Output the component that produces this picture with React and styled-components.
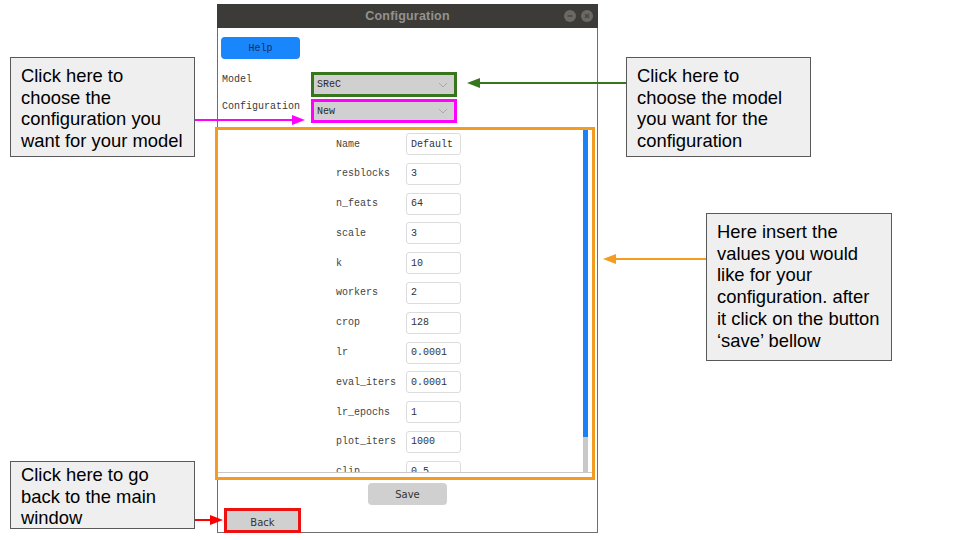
import React from "react";
import styled, { createGlobalStyle } from "styled-components";

const fields = [
  ["Name", "Default"],
  ["resblocks", "3"],
  ["n_feats", "64"],
  ["scale", "3"],
  ["k", "10"],
  ["workers", "2"],
  ["crop", "128"],
  ["lr", "0.0001"],
  ["eval_iters", "0.0001"],
  ["lr_epochs", "1"],
  ["plot_iters", "1000"],
  ["clip", "0.5"],
];

const Chevron = () => (
  <ChevronSvg viewBox="0 0 10 6" width="10" height="6">
    <polyline points="1,1 5,5 9,1" fill="none" stroke="#a8a8a8" strokeWidth="1" />
  </ChevronSvg>
);

const App = () => {
  return (
    <>
      <GlobalStyle />
      <Canvas>
        <Window>
          <TitleBar>
            <span />
            <Title>Configuration</Title>
            <Controls>
              <CircleButton>
                <svg viewBox="0 0 12 12" width="12" height="12">
                  <line x1="3.5" y1="6" x2="8.5" y2="6" stroke="#45443f" strokeWidth="1.4" />
                </svg>
              </CircleButton>
              <CircleButton>
                <svg viewBox="0 0 12 12" width="12" height="12">
                  <path d="M4 4 L8 8 M8 4 L4 8" stroke="#45443f" strokeWidth="1.4" />
                </svg>
              </CircleButton>
            </Controls>
          </TitleBar>

          <Body>
            <HelpButton>Help</HelpButton>

            <FieldGrid>
              <Label>Model</Label>
              <Select $ring="#38761d" $h={25}>
                SReC
                <Chevron />
              </Select>
              <Label>Configuration</Label>
              <Select $ring="#ff00ff" $h={24}>
                New
                <Chevron />
              </Select>
            </FieldGrid>

            <Panel>
              <Viewport>
                <FormGrid>
                  {fields.map(([name, value]) => (
                    <React.Fragment key={name}>
                      <FieldName>{name}</FieldName>
                      <Input>{value}</Input>
                    </React.Fragment>
                  ))}
                </FormGrid>
                <Scrollbar>
                  <Thumb />
                </Scrollbar>
              </Viewport>
            </Panel>

            <SaveButton>Save</SaveButton>
            <BackButton>Back</BackButton>
          </Body>
        </Window>

        <Callout $left={10} $top={57} $w={185} $h={100} $pt={7}>
          Click here to
          <br />
          choose the
          <br />
          configuration you
          <br />
          want for your model
        </Callout>

        <Callout $left={626} $top={57} $w={185} $h={100} $pt={7}>
          Click here to
          <br />
          choose the model
          <br />
          you want for the
          <br />
          configuration
        </Callout>

        <Callout $left={706} $top={213} $w={186} $h={148} $pt={7}>
          Here insert the
          <br />
          values you would
          <br />
          like for your
          <br />
          configuration. after
          <br />
          it click on the button
          <br />
          ‘save’ bellow
        </Callout>

        <Callout $left={10} $top={461} $w={185} $h={68} $pt={2}>
          Click here to go
          <br />
          back to the main
          <br />
          window
        </Callout>

        <Arrows viewBox="0 0 960 540" width="960" height="540">
          <line x1="626" y1="83" x2="478" y2="83" stroke="#38761d" strokeWidth="2" />
          <polygon points="467,83 480,78 480,88" fill="#38761d" />

          <line x1="195" y1="120" x2="294" y2="120" stroke="#ff00ff" strokeWidth="2" />
          <polygon points="305,120 292,115 292,125" fill="#ff00ff" />

          <line x1="706" y1="259" x2="614" y2="259" stroke="#f39c1f" strokeWidth="2" />
          <polygon points="603,259 616,254 616,264" fill="#f39c1f" />

          <line x1="195" y1="520" x2="212" y2="520" stroke="#ff0000" strokeWidth="2" />
          <polygon points="223,520 210,515 210,525" fill="#ff0000" />
        </Arrows>
      </Canvas>
    </>
  );
};

const GlobalStyle = createGlobalStyle`
  body {
    margin: 0;
    background: #fff;
  }
`;

const Canvas = styled.div`
  position: relative;
  width: 960px;
  height: 540px;
  overflow: hidden;
  padding-top: 4px;
  box-sizing: border-box;
  background: #fff;
`;

const Window = styled.div`
  margin-left: 217px;
  width: 381px;
  height: 529px;
  box-sizing: border-box;
  border-left: 1px solid #6f6f6f;
  border-right: 1px solid #6f6f6f;
  border-bottom: 1px solid #6f6f6f;
  display: flex;
  flex-direction: column;
  background: #fff;
`;

const TitleBar = styled.div`
  height: 24px;
  flex-shrink: 0;
  background: #3c3b37;
  margin: 0 -1px;
  display: grid;
  grid-template-columns: 1fr auto 1fr;
  align-items: center;
`;

const Title = styled.div`
  font-family: "Liberation Sans", Arial, sans-serif;
  font-weight: bold;
  font-size: 12.5px;
  color: #94928c;
  letter-spacing: 0.2px;
`;

const Controls = styled.div`
  display: flex;
  justify-content: flex-end;
  gap: 5px;
  padding-right: 5px;
`;

const CircleButton = styled.div`
  width: 12px;
  height: 12px;
  border-radius: 50%;
  background: #6a6964;
  display: flex;

  svg {
    display: block;
  }
`;

const Body = styled.div`
  flex: 1;
  display: flex;
  flex-direction: column;
  align-items: flex-start;
  padding-top: 9px;
  font-family: "Liberation Mono", "DejaVu Sans Mono", monospace;
  font-size: 10px;
  color: #3a3a3a;
`;

const HelpButton = styled.div`
  margin-left: 3px;
  width: 79px;
  height: 22px;
  border-radius: 4px;
  background: #1a86fc;
  color: #1d2a55;
  display: flex;
  align-items: center;
  justify-content: center;
`;

const FieldGrid = styled.div`
  margin-top: 13px;
  padding-left: 4px;
  display: grid;
  grid-template-columns: 89px 146px;
  row-gap: 2px;
  align-items: start;
`;

const Label = styled.div`
  line-height: 13px;
  padding-top: 1px;
`;

const Select = styled.div`
  height: ${(p) => p.$h}px;
  box-sizing: border-box;
  border: 3px solid ${(p) => p.$ring};
  background: #d0d0d0;
  display: flex;
  align-items: center;
  justify-content: space-between;
  padding: 0 6px 0 3px;
  color: #2a2a2a;
`;

const ChevronSvg = styled.svg`
  display: block;
`;

const Panel = styled.div`
  margin-top: 4px;
  margin-left: -3px;
  width: 380px;
  height: 353px;
  box-sizing: border-box;
  border: 3px solid #f39c1f;
`;

const Viewport = styled.div`
  height: 343px;
  box-sizing: border-box;
  border-bottom: 1px solid #c8c8c8;
  display: flex;
  overflow: hidden;
`;

const FormGrid = styled.div`
  flex: 1;
  display: grid;
  grid-template-columns: 70px 55px;
  grid-auto-rows: 22px;
  row-gap: 7.8px;
  align-items: center;
  padding: 3px 0 0 118px;
`;

const FieldName = styled.div`
  color: #444;
`;

const Input = styled.div`
  height: 22px;
  box-sizing: border-box;
  border: 1px solid #dcdcdc;
  border-radius: 3px;
  padding-left: 4px;
  display: flex;
  align-items: center;
  color: #333;
  background: #fff;
`;

const Scrollbar = styled.div`
  width: 5px;
  margin-right: 4px;
  background: #c9c9c9;
  display: flex;
  flex-direction: column;
`;

const Thumb = styled.div`
  height: 307px;
  background: #1a82f5;
`;

const SaveButton = styled.div`
  margin-top: 3px;
  margin-left: 150px;
  width: 79px;
  height: 22px;
  border-radius: 4px;
  background: #d0d0d0;
  font-family: "DejaVu Sans", sans-serif;
  font-size: 10px;
  color: #333;
  display: flex;
  align-items: center;
  justify-content: center;
`;

const BackButton = styled.div`
  margin-top: 3px;
  margin-left: 6px;
  width: 77px;
  height: 25px;
  box-sizing: border-box;
  border: 3px solid #ee1111;
  background: #d0d0d0;
  font-family: "DejaVu Sans", sans-serif;
  font-size: 10px;
  color: #333;
  display: flex;
  align-items: center;
  justify-content: center;
  padding-top: 4px;
`;

const Callout = styled.div`
  position: absolute;
  left: ${(p) => p.$left}px;
  top: ${(p) => p.$top}px;
  width: ${(p) => p.$w}px;
  height: ${(p) => p.$h}px;
  box-sizing: border-box;
  padding: ${(p) => p.$pt}px 0 0 10px;
  background: #efefef;
  border: 1px solid #595959;
  font-family: "Liberation Sans", Arial, sans-serif;
  font-size: 18.4px;
  line-height: 21.7px;
  color: #000;
  white-space: nowrap;
`;

const Arrows = styled.svg`
  position: absolute;
  left: 0;
  top: 0;
  pointer-events: none;
`;

export default App;
